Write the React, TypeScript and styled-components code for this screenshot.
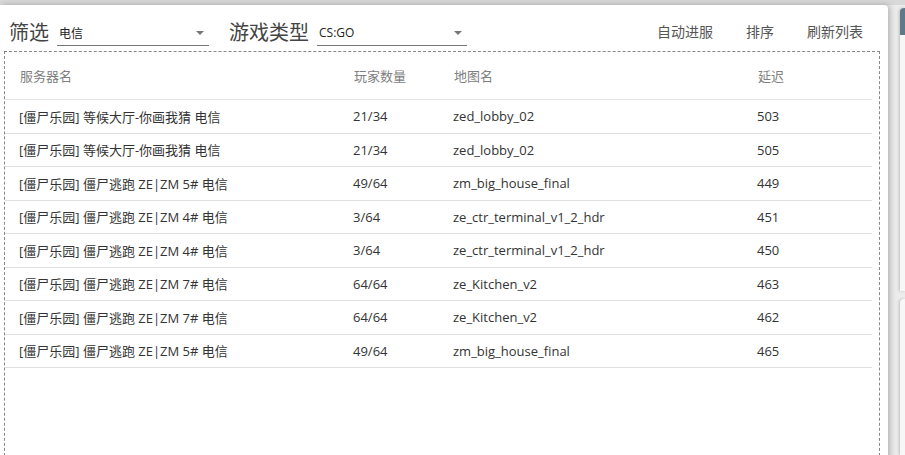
import React from 'react';
import styled, { createGlobalStyle } from 'styled-components';

const GlobalStyle = createGlobalStyle`
  html, body {
    margin: 0;
    padding: 0;
    background: #d9d9d9;
    font-family: "Open Sans", "Noto Sans CJK SC", sans-serif;
    overflow: hidden;
  }
`;

type Server = { name: string; players: string; map: string; ping: number };

const servers: Server[] = [
  { name: '[僵尸乐园] 等候大厅-你画我猜 电信', players: '21/34', map: 'zed_lobby_02', ping: 503 },
  { name: '[僵尸乐园] 等候大厅-你画我猜 电信', players: '21/34', map: 'zed_lobby_02', ping: 505 },
  { name: '[僵尸乐园] 僵尸逃跑 ZE|ZM 5# 电信', players: '49/64', map: 'zm_big_house_final', ping: 449 },
  { name: '[僵尸乐园] 僵尸逃跑 ZE|ZM 4# 电信', players: '3/64', map: 'ze_ctr_terminal_v1_2_hdr', ping: 451 },
  { name: '[僵尸乐园] 僵尸逃跑 ZE|ZM 4# 电信', players: '3/64', map: 'ze_ctr_terminal_v1_2_hdr', ping: 450 },
  { name: '[僵尸乐园] 僵尸逃跑 ZE|ZM 7# 电信', players: '64/64', map: 'ze_Kitchen_v2', ping: 463 },
  { name: '[僵尸乐园] 僵尸逃跑 ZE|ZM 7# 电信', players: '64/64', map: 'ze_Kitchen_v2', ping: 462 },
  { name: '[僵尸乐园] 僵尸逃跑 ZE|ZM 5# 电信', players: '49/64', map: 'zm_big_house_final', ping: 465 },
];

const App: React.FC = () => {
  return (
    <React.Fragment>
      <GlobalStyle />
      <Page>
        <MainCard>
          <Toolbar>
            <FilterLabel>筛选</FilterLabel>
            <Select $width={152}>
              <SelectValue>电信</SelectValue>
              <Arrow />
            </Select>
            <FilterLabel $gap>游戏类型</FilterLabel>
            <Select $width={150}>
              <SelectValue>CS:GO</SelectValue>
              <Arrow />
            </Select>
            <Actions>
              <ActionButton>自动进服</ActionButton>
              <ActionButton>排序</ActionButton>
              <ActionButton>刷新列表</ActionButton>
            </Actions>
          </Toolbar>
          <ListBox>
            <Table>
              <colgroup>
                <col style={{ width: 334 }} />
                <col style={{ width: 100 }} />
                <col style={{ width: 304 }} />
                <col />
              </colgroup>
              <thead>
                <tr>
                  <HeadCell>服务器名</HeadCell>
                  <HeadCell>玩家数量</HeadCell>
                  <HeadCell>地图名</HeadCell>
                  <HeadCell>延迟</HeadCell>
                </tr>
              </thead>
              <tbody>
                {servers.map((s, i) => (
                  <Row key={i}>
                    <Cell>{s.name}</Cell>
                    <Cell>{s.players}</Cell>
                    <Cell>{s.map}</Cell>
                    <Cell>{s.ping}</Cell>
                  </Row>
                ))}
              </tbody>
            </Table>
          </ListBox>
        </MainCard>
        <Side>
          <SideCard $height={290}>
            <SideHeader />
          </SideCard>
          <SideCard $height={160} />
        </Side>
      </Page>
    </React.Fragment>
  );
};

const Page = styled.div`
  display: flex;
  padding-top: 5px;
  height: 450px;
  background: linear-gradient(#d9d9d9 0, #d9d9d9 5px, #ececec 5px);
`;

const MainCard = styled.div`
  width: 888px;
  flex-shrink: 0;
  height: 460px;
  background: #fff;
  border-top-right-radius: 4px;
  box-shadow: 2px 0 6px rgba(0, 0, 0, 0.25);
  position: relative;
  z-index: 1;
`;

const Toolbar = styled.div`
  display: flex;
  align-items: center;
  box-sizing: border-box;
  height: 46px;
  padding-top: 4px;
  padding-left: 9px;
  padding-right: 25px;
`;

const FilterLabel = styled.span<{ $gap?: boolean }>`
  font-family: "Noto Sans CJK SC", sans-serif;
  font-size: 20px;
  color: #444;
  margin-left: ${(p) => (p.$gap ? '20px' : '0')};
  margin-right: 8px;
  position: relative;
  top: 1px;
`;

const Select = styled.div<{ $width: number }>`
  width: ${(p) => p.$width}px;
  height: 25px;
  margin-top: 6px;
  border-bottom: 1px solid #777;
  display: flex;
  align-items: center;
  justify-content: space-between;
  box-sizing: border-box;
  padding: 0 5px 0 2px;
`;

const SelectValue = styled.span`
  font-family: "Open Sans", "Noto Sans CJK SC", sans-serif;
  font-size: 12px;
  color: #222;
`;

const Arrow = styled.span`
  width: 0;
  height: 0;
  border-left: 4px solid transparent;
  border-right: 4px solid transparent;
  border-top: 4px solid #777;
`;

const Actions = styled.div`
  margin-left: auto;
  display: flex;
  gap: 33px;
  margin-top: 2px;
`;

const ActionButton = styled.span`
  font-family: "Noto Sans CJK SC", sans-serif;
  font-size: 14px;
  color: #555;
  cursor: pointer;
`;

const ListBox = styled.div`
  margin: 0 8px 0 4px;
  height: 420px;
  border: 1px dashed #888;
  box-sizing: border-box;
  padding-right: 7px;
`;

const Table = styled.table`
  width: 100%;
  border-collapse: collapse;
  table-layout: fixed;
  font-family: "Open Sans", "Noto Sans CJK SC", sans-serif;
  font-size: 13px;
`;

const HeadCell = styled.th`
  height: 47px;
  padding: 0 0 0 15px;
  text-align: left;
  font-weight: 400;
  color: #808080;
  font-family: "Noto Sans CJK SC", sans-serif;
  font-size: 13px;
  border-bottom: 1px solid #e6e6e6;
`;

const Row = styled.tr`
  height: 33.5px;
`;

const Cell = styled.td`
  padding: 0 0 0 14px;
  color: #333;
  white-space: nowrap;
  border-bottom: 1px solid #e0e0e0;
`;

const Side = styled.div`
  flex: 1;
  display: flex;
  flex-direction: column;
  gap: 8px;
  padding: 3px 0 0 12px;
`;

const SideCard = styled.div<{ $height: number }>`
  height: ${(p) => p.$height}px;
  background: #f7f7f7;
  border-top-left-radius: 4px;
  box-shadow: -1px 0 3px rgba(0, 0, 0, 0.2);
  overflow: hidden;
`;

const SideHeader = styled.div`
  height: 27px;
  background: #5e7a88;
`;

export default App;
